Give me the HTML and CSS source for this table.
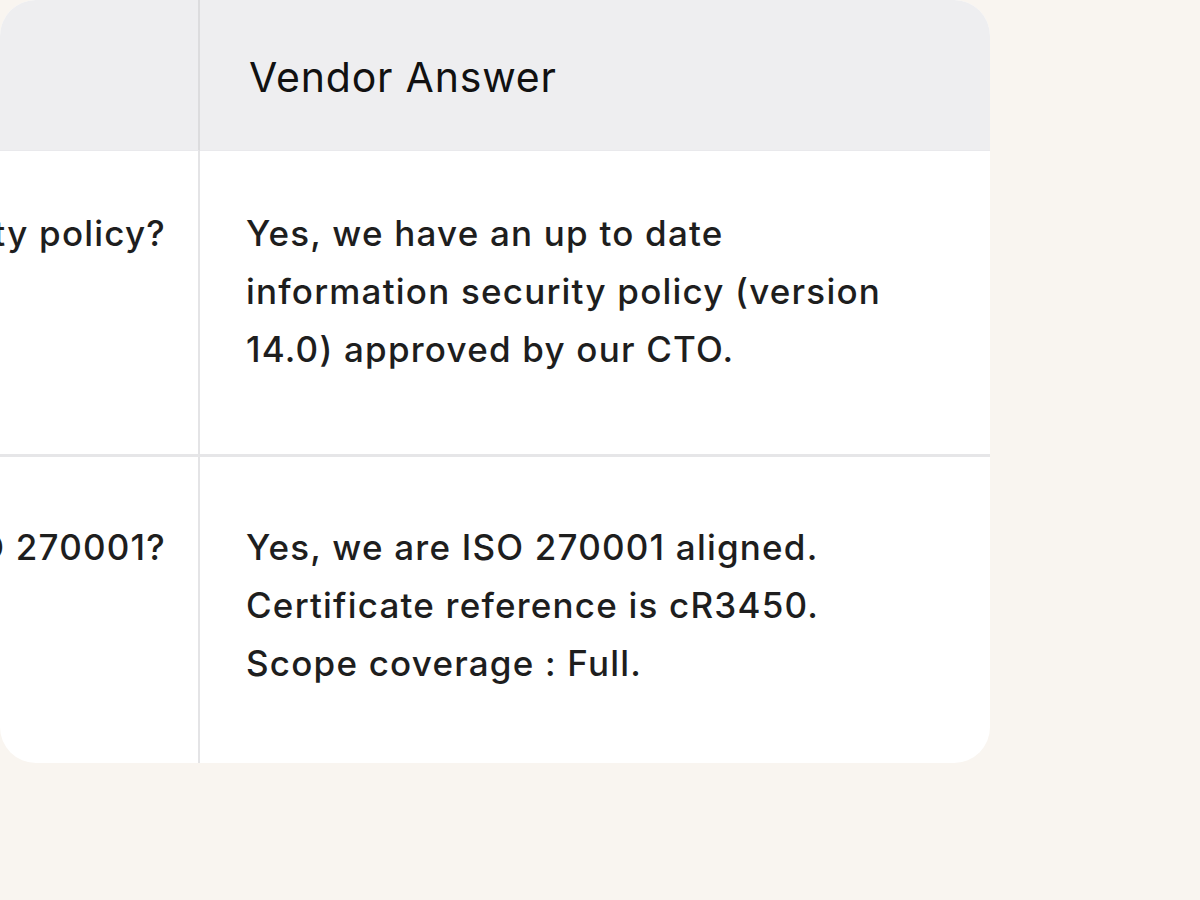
FILE: index.html
```html
<!DOCTYPE html>
<html lang="en">
<head>
<meta charset="utf-8">
<title>Vendor questionnaire</title>
<link rel="stylesheet" href="styles.css">
</head>
<body>
<div class="stage">
  <div class="card">
    <div class="cell head q"></div>
    <div class="cell head a">Vendor Answer</div>

    <div class="cell q row1"><span class="qtext">Do you have an information security policy?</span></div>
    <div class="cell a row1">Yes, we have an up to date<br>information security policy (version<br>14.0) approved by our CTO.</div>

    <div class="cell q row2 last"><span class="qtext">Are you certified to ISO 270001?</span></div>
    <div class="cell a row2 last">Yes, we are ISO 270001 aligned.<br>Certificate reference is cR3450.<br>Scope coverage : Full.</div>
  </div>
</div>
</body>
</html>
```

FILE: styles.css
```css
html, body {
  margin: 0;
  padding: 0;
  background: #f9f5f0;
  font-family: "Inter", "Noto Sans", sans-serif;
}

.stage {
  width: 1200px;
  height: 900px;
  overflow: hidden;
}

.card {
  width: 990px;
  height: 763px;
  background: #ffffff;
  border-radius: 36px;
  overflow: hidden;
  display: grid;
  grid-template-columns: 200px 1fr;
  grid-template-rows: 151px 306px 306px;
}

.cell {
  box-sizing: border-box;
  color: #1e1e1e;
  font-size: 35px;
  font-weight: 450;
  letter-spacing: 1.2px;
  line-height: 58px;
}

.cell.q {
  border-right: 2px solid #e4e4e6;
  display: flex;
  justify-content: flex-end;
  align-items: flex-start;
  padding-right: 32px;
  white-space: nowrap;
}

.cell.a {
  padding-left: 46px;
}

.head {
  background: #eeeef0;
  border-bottom: 1px solid #e9e9ec;
}

.head.q {
  border-right-color: #dcdcde;
}

.head.a {
  display: flex;
  align-items: center;
  padding-left: 49px;
  padding-top: 4px;
  color: #111111;
  font-size: 41px;
  font-weight: 400;
  letter-spacing: 0.8px;
}

.row1 {
  padding-top: 53px;
  border-bottom: 3px solid #e6e6e8;
}

.row2 {
  padding-top: 61px;
}

.qtext {
  flex: none;
}
```
